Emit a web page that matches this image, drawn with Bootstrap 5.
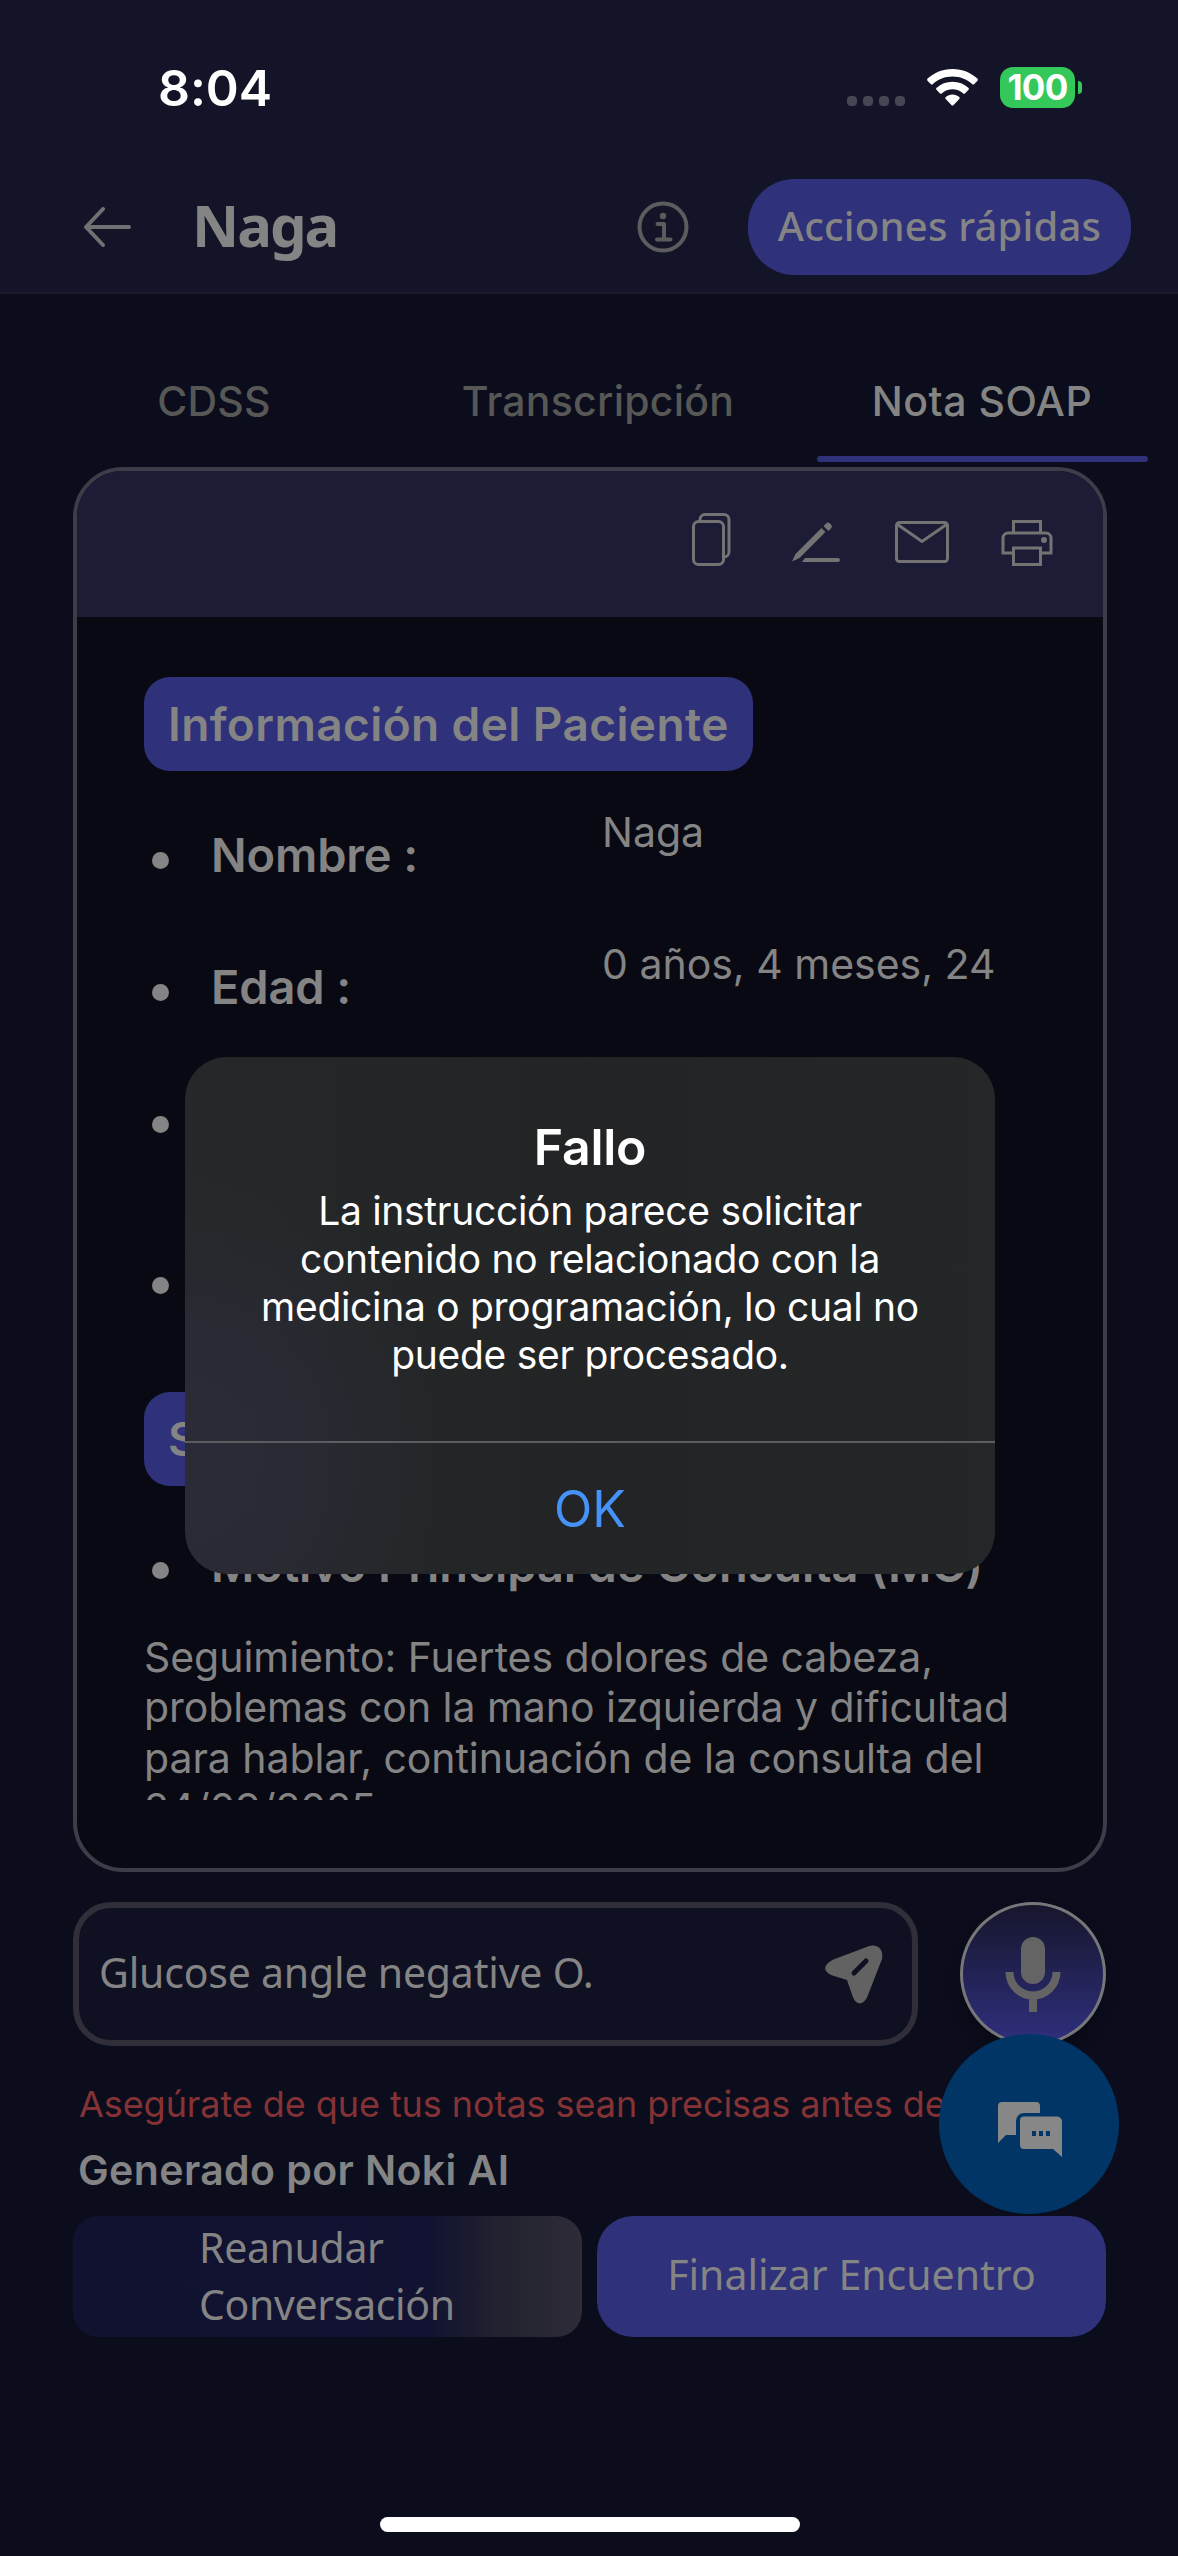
<!DOCTYPE html>
<html lang="es">
<head>
<meta charset="utf-8">
<meta name="viewport" content="width=device-width, initial-scale=1">
<title>Nota SOAP</title>
<link href="https://cdn.jsdelivr.net/npm/bootstrap@5.3.0/dist/css/bootstrap.min.css" rel="stylesheet">
<style>
body{margin:0;background:#0b0d1d;font-family:Inter,"Liberation Sans",sans-serif;color:#848484}
.app{width:1178px;height:2556px;overflow:hidden}
.app svg{display:block;flex:none}
.nun{font-family:"Noto Sans","Open Sans",sans-serif}
.t{white-space:nowrap}
.topbar{height:294px;background:#131428;border-bottom:2px solid #191a2b}
.status{height:178px;padding:0 96px 3px 158px}
.clock{font-size:50px;font-weight:600;color:#fff;line-height:174px;letter-spacing:-.1px}
.cell{gap:6px;margin:26px 22px 0 0}
.cell i{width:10px;height:10px;border-radius:4px;background:#464657}
.battery{width:75px;height:41px;border-radius:13px;background:#34c759;color:#fff;font-size:35px;font-weight:700;line-height:41px;margin-left:22px;letter-spacing:-.7px}
.nub{width:4px;height:13px;border-radius:0 4px 4px 0;background:#34c759;margin-left:3px}
.titlebar{height:98px;padding:0 47px 0 84px}
.name{font-size:58px;font-weight:700;line-height:94px;margin:-4px 0 0 61px;letter-spacing:-2px}
.quick,.quick:hover{width:383px;height:96px;border-radius:46px;background:#2f317a;color:#848484;font-size:40px;font-weight:500;border:0;padding:0 0 3px;margin-left:59px;letter-spacing:.2px}
.tabs3{height:173px;padding:0 4px 0 22px}
.tabs3 .nav-link{height:168px;padding:0;color:#575755;font-size:41px;font-weight:500;line-height:214px;flex:1 1 0;text-align:center;border-radius:0;position:relative;letter-spacing:.25px}
.tabs3 .nav-link.active{color:#848482;background:none;letter-spacing:.5px}
.tabs3 .active::after{content:"";position:absolute;left:27px;right:26px;bottom:0;height:6px;border-radius:3px;background:#2f317a}
.note{margin:0 71px 0 73px;height:1405px;border:4px solid #3b3d49;border-radius:50px;background:#090913;overflow:hidden}
.tools{height:146px;background:#1d1c36;padding:0 50px 0 0;color:#737374}
.tools .copy{margin:-9px 61px 0 0}
.tools .pen{margin:-3px 55px 0 0}
.tools .mail{margin:-4px 52px 0 0}
.tools .print{margin-top:-3px}
.content{height:1183px;overflow:hidden;padding:60px 0 0 67px}
.chip{width:609px;height:94px;border-radius:26px;background:#2f317a;padding:0 24px;font-size:46px;font-weight:600;line-height:94px;letter-spacing:.4px}
.chip.short{width:300px;margin-top:46px}
.item{height:132px}
.item.first{margin-top:18px}
.item.tall{height:161px}
.item.motive{margin-top:13px}
.item .dot{width:17px;height:17px;border-radius:50%;background:#848484;margin:63px 42px 0 8px;flex:none}
.item .lbl{font-size:47px;font-weight:600;line-height:132px;width:391px;letter-spacing:-.15px}
.item .val{font-size:41px;line-height:87px;letter-spacing:0}
.para{font-size:41px;line-height:50.3px;margin:0;padding-top:1px;letter-spacing:-.05px}
.compose{margin:30px 72px 0 73px}
.field{width:845px;height:144px;border:6px solid #302e38;border-radius:38px;background:#0f1022;padding:0 29px 0 20px;font-size:41px;letter-spacing:-.2px}
.field span{margin-top:-3px}
.mic{width:146px;height:144px;border-radius:50%;border:3px solid #77777a;background:linear-gradient(#16162c,#2f2f7e);box-shadow:0 10px 16px rgba(0,0,0,.3);color:#646464}
.warn{color:#853235;font-size:36px;line-height:40px;margin:38px 0 0 79px;letter-spacing:-.07px}
.gen{font-size:41px;font-weight:600;line-height:46px;margin:23px 0 0 78px;letter-spacing:.4px}
.acts{margin:23px 72px 0 73px;gap:15px}
.acts .btn{width:509px;height:121px;border:0;padding:0;color:#848484;font-size:41px}
.acts .resume{border-radius:26px;background:linear-gradient(90deg,#111230 0,#121332 70%,#22222f 84%,#2d2c37 100%);text-align:left;letter-spacing:-.35px}
.resume span{display:block;line-height:57px;padding:0 0 0 126px}
.resume span:last-child{margin-bottom:2px}
.acts .finish{border-radius:36px;background:#2f317a;padding-bottom:3px}
.home{width:420px;height:15px;border-radius:8px;background:#fff;margin:180px auto 0 380px}
.fab{position:absolute;left:939px;top:2034px;width:180px;height:180px;border-radius:50%;background:#003566;color:#878787;padding:10px 0 0 2px}
.alertbox{position:absolute;left:185px;top:1057px;width:810px;height:517px;border-radius:42px;overflow:hidden;color:#fff;text-align:center;background:radial-gradient(ellipse 270px 300px at 0 78%,#2b2b38 0,#292a33 45%,rgba(36,37,39,0) 100%),linear-gradient(90deg,#252828,#222426 50%,#242727)}
.alertbox h2{font-size:50px;font-weight:600;line-height:60px;margin:60px 0 0;letter-spacing:-.3px}
.alertbox p{font-size:39px;line-height:48px;margin:10px 0 0;height:254px;letter-spacing:-.3px}
.ok{height:133px;border-top:2px solid #5c5d61;color:#4593f8;font-size:50px;line-height:132px}
</style>
</head>
<body>
<div class="app position-relative d-flex flex-column">
<header class="topbar">
 <div class="status d-flex justify-content-between align-items-center">
  <div class="clock t">8:04</div>
  <div class="d-flex align-items-center">
   <div class="cell d-flex"><i></i><i></i><i></i><i></i></div>
   <svg width="51" height="38" viewBox="0 0 51 38" fill="#fff"><path d="M25.500 0C35.500 0 44 3.800 50.300 9.600a1.600 1.600 0 0 1 0 2.300l-3 3a1.600 1.600 0 0 1-2.200 0C39.800 10.200 33 7.500 25.500 7.500S11.200 10.200 5.900 14.900a1.600 1.600 0 0 1-2.200 0l-3-3a1.600 1.600 0 0 1 0-2.300C7 3.800 15.500 0 25.500 0zM25.500 12.800c6.200 0 11.600 2.300 15.800 6a1.600 1.600 0 0 1 0 2.300l-3.100 3.100a1.600 1.600 0 0 1-2.200 0c-2.900-2.500-6.500-3.900-10.500-3.900s-7.600 1.400-10.500 3.900a1.600 1.600 0 0 1-2.200 0l-3.100-3.100a1.600 1.600 0 0 1 0-2.300c4.200-3.700 9.600-6 15.800-6zM25.500 25.500c2.600 0 4.900.9 6.700 2.400.7.600.7 1.500.1 2.200l-5.700 5.800a1.500 1.500 0 0 1-2.200 0l-5.700-5.800c-.6-.7-.6-1.600.1-2.200 1.800-1.500 4.100-2.400 6.700-2.400z"/></svg>
   <div class="battery text-center t">100</div><div class="nub"></div>
  </div>
 </div>
 <div class="titlebar d-flex align-items-center">
  <svg width="47" height="40" viewBox="0 0 47 40" fill="none" stroke="#707072" stroke-width="4" stroke-linecap="round" stroke-linejoin="round"><path d="M19 2 2 20l17 18M2.500 20H45"/></svg>
  <div class="name nun t">Naga</div>
  <svg class="ms-auto" width="52" height="52" viewBox="0 0 52 52" fill="none" stroke="#5c5c5f" stroke-width="4"><circle cx="26" cy="26" r="23.500"/><circle cx="26" cy="15" r="3.200" fill="#5c5c5f" stroke="none"/><path d="M20.500 23H27v15M20 38.500h13.500" stroke-linecap="round" stroke-linejoin="round"/></svg>
  <button class="btn quick nun t">Acciones rápidas</button>
 </div>
</header>
<nav class="nav tabs3 flex-nowrap">
 <a class="nav-link t">CDSS</a>
 <a class="nav-link t">Transcripción</a>
 <a class="nav-link active t">Nota SOAP</a>
</nav>
<main class="note">
 <div class="tools d-flex align-items-center justify-content-end">
  <svg class="copy" width="39" height="53" viewBox="0 0 39 53" fill="none" stroke="currentColor" stroke-width="3"><rect x="1.500" y="8.500" width="30" height="43" rx="5"/><path d="M8 8V6.500a5 5 0 0 1 5-5h19a5 5 0 0 1 5 5V39a5 5 0 0 1-5 5"/></svg>
  <svg class="pen" width="48" height="41" viewBox="0 0 48 41" fill="currentColor"><path d="M0 39.500 3.500 32 29.500 6l4 4L7.500 36zM31.500 4 34 1.500a3 3 0 0 1 4 0l1 1a3 3 0 0 1 0 4L36.500 9zM13 36h33a2 2 0 0 1 0 4H10z"/></svg>
  <svg class="mail" width="54" height="42" viewBox="0 0 54 42" fill="none" stroke="currentColor" stroke-width="3"><rect x="1.500" y="1.500" width="51" height="39" rx="3"/><path d="m2.500 3.500 24.500 17 24.500-17"/></svg>
  <svg class="print" width="52" height="46" viewBox="0 0 52 46" fill="none" stroke="currentColor" stroke-width="3"><path d="M12.500 13V1.500h27V13M12 33H2V18a5 5 0 0 1 5-5h38a5 5 0 0 1 5 5v15H40M12.500 28h27v16.500h-27z"/><circle cx="43" cy="20" r="3" fill="currentColor" stroke="none"/></svg>
 </div>
 <div class="content">
  <div class="chip t">Información del Paciente</div>
  <div class="item first d-flex"><div class="dot"></div><div class="lbl t">Nombre :</div><div class="val t">Naga</div></div>
  <div class="item d-flex"><div class="dot"></div><div class="lbl t">Edad :</div><div class="val t">0 años, 4 meses, 24</div></div>
  <div class="item tall d-flex"><div class="dot"></div></div>
  <div class="item d-flex"><div class="dot"></div></div>
  <div class="chip short t">S</div>
  <div class="item motive d-flex"><div class="dot"></div><div class="lbl t">Motivo Principal de Consulta (MC)</div></div>
  <p class="para t">Seguimiento: Fuertes dolores de cabeza,<br>problemas con la mano izquierda y dificultad<br>para hablar, continuación de la consulta del<br>24/09/2025</p>
 </div>
</main>
<section class="compose d-flex justify-content-between">
 <div class="field nun d-flex align-items-center justify-content-between t"><span>Glucose angle negative O.</span>
  <svg width="58" height="59" viewBox="0 0 58 59"><path d="M11 13.500 43 1.500C51-1.500 59 3 57 14L43 50c-4 11-12 11-15.500 1L22 35 9 31C-3 27-3 19 11 13.500z" fill="#626262"/><path d="M29 28 41 16" stroke="#0f1022" stroke-width="5" stroke-linecap="round"/></svg></div>
 <div class="mic d-flex align-items-center justify-content-center"><svg width="56" height="75" viewBox="0 0 56 75" fill="none" stroke="currentColor"><rect x="16" y="0" width="24" height="47" rx="12" fill="currentColor" stroke="none"/><path d="M4.500 35a23.500 23.500 0 0 0 47 0M28 58v17" stroke-width="8"/></svg></div>
</section>
<div class="warn t">Asegúrate de que tus notas sean precisas antes de</div>
<div class="gen t">Generado por Noki AI</div>
<div class="acts d-flex nun">
 <button class="btn resume"><span>Reanudar</span><span>Conversación</span></button>
 <button class="btn finish">Finalizar Encuentro</button>
</div>
<div class="home"></div>
<div class="fab d-flex align-items-center justify-content-center"><svg width="64" height="55" viewBox="0 0 64 55" fill="currentColor"><path d="M4 0h34a4 4 0 0 1 4 4v7H26a8 8 0 0 0-8 8v14H8l-8 8V4a4 4 0 0 1 4-4z"/><path fill-rule="evenodd" d="M26 14.500h33a5 5 0 0 1 5 5V55l-9-8H26a4 4 0 0 1-4-4V18.500a4 4 0 0 1 4-4zM34 29v5h4v-5zm7 0v5h4v-5zm7 0v5h4v-5z"/></svg></div>
<div class="alertbox" role="alertdialog">
 <h2>Fallo</h2>
 <p>La instrucción parece solicitar<br>contenido no relacionado con la<br>medicina o programación, lo cual no<br>puede ser procesado.</p>
 <div class="ok">OK</div>
</div>
</div>
<script src="https://cdn.jsdelivr.net/npm/bootstrap@5.3.0/dist/js/bootstrap.bundle.min.js"></script>
</body>
</html>
